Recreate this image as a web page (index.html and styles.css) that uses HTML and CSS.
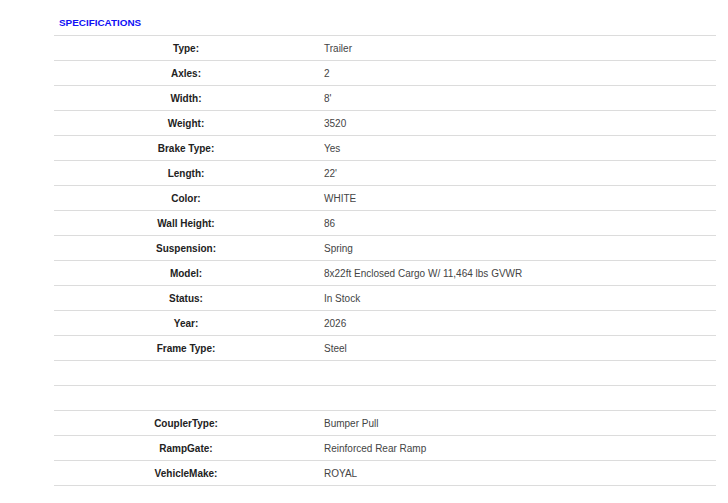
FILE: index.html
```html
<!DOCTYPE html>
<html>
<head>
<meta charset="utf-8">
<link rel="stylesheet" href="styles.css">
</head>
<body>
<div class="wrap">
  <h2 class="title">SPECIFICATIONS</h2>
  <table class="specs">
    <tr><th>Type:</th><td>Trailer</td></tr>
    <tr><th>Axles:</th><td>2</td></tr>
    <tr><th>Width:</th><td>8'</td></tr>
    <tr><th>Weight:</th><td>3520</td></tr>
    <tr><th>Brake Type:</th><td>Yes</td></tr>
    <tr><th>Length:</th><td>22'</td></tr>
    <tr><th>Color:</th><td>WHITE</td></tr>
    <tr><th>Wall Height:</th><td>86</td></tr>
    <tr><th>Suspension:</th><td>Spring</td></tr>
    <tr><th>Model:</th><td>8x22ft Enclosed Cargo W/ 11,464 lbs GVWR</td></tr>
    <tr><th>Status:</th><td>In Stock</td></tr>
    <tr><th>Year:</th><td>2026</td></tr>
    <tr><th>Frame Type:</th><td>Steel</td></tr>
    <tr><th></th><td></td></tr>
    <tr><th></th><td></td></tr>
    <tr><th>CouplerType:</th><td>Bumper Pull</td></tr>
    <tr><th>RampGate:</th><td>Reinforced Rear Ramp</td></tr>
    <tr><th>VehicleMake:</th><td>ROYAL</td></tr>
  </table>
</div>
</body>
</html>
```
FILE: styles.css
```css
html, body {
  margin: 0;
  padding: 0;
  background: #ffffff;
}
body {
  font-family: "Liberation Sans", Arial, sans-serif;
}
.wrap {
  margin-left: 54px;
  width: 662px;
}
.title {
  margin: 0;
  padding: 17px 0 0 5px;
  height: 18px;
  font-size: 9.9px;
  font-weight: bold;
  color: #1010f5;
  line-height: 12px;
}
.specs {
  width: 662px;
  border-collapse: collapse;
  table-layout: fixed;
}
.specs tr {
  height: 25px;
  border-top: 1px solid #dcdcdc;
}
.specs tr:last-child {
  border-bottom: 1px solid #dcdcdc;
}
.specs th, .specs td {
  padding: 1px 0 0 0;
  height: 23px;
  font-size: 10px;
  line-height: 12px;
  vertical-align: middle;
}
.specs th {
  width: 264px;
  text-align: center;
  font-weight: bold;
  color: #222;
}
.specs td {
  text-align: left;
  padding-left: 6px;
  color: #444;
}
```
